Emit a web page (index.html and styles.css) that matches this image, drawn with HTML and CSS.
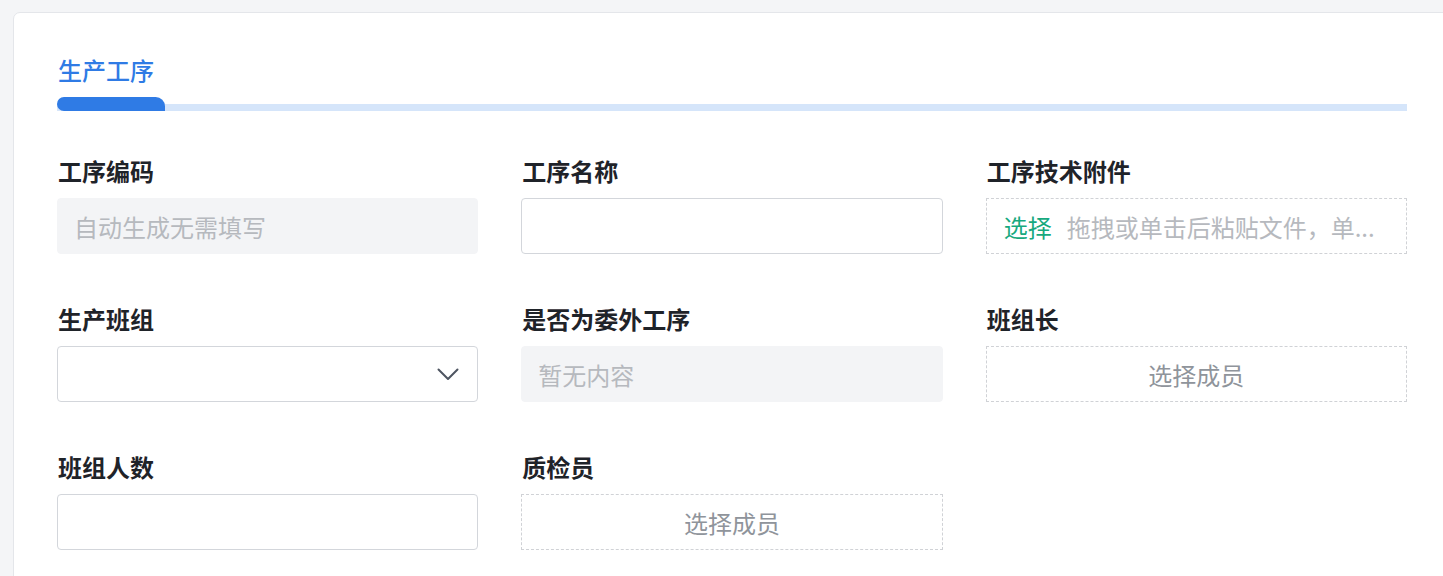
FILE: index.html
```html
<!DOCTYPE html>
<html lang="zh-CN">
<head>
<meta charset="utf-8">
<title>生产工序</title>
<link rel="stylesheet" href="styles.css">
</head>
<body>
<div class="page">
  <div class="card">
    <div class="tabs">
      <div class="tab-title">生产工序</div>
      <div class="tab-track"><div class="tab-indicator"></div></div>
    </div>
    <div class="form">
      <div class="field">
        <div class="label">工序编码</div>
        <div class="input disabled"><span class="placeholder">自动生成无需填写</span></div>
      </div>
      <div class="field">
        <div class="label">工序名称</div>
        <div class="input"></div>
      </div>
      <div class="field">
        <div class="label">工序技术附件</div>
        <div class="dashed upload"><span class="upload-btn">选择</span><span class="upload-tip">拖拽或单击后粘贴文件，单...</span></div>
      </div>
      <div class="field">
        <div class="label">生产班组</div>
        <div class="input select">
          <svg class="chevron" width="22" height="13" viewBox="0 0 22 13"><path d="M1.5 1.5 L11 11 L20.5 1.5" fill="none" stroke="#4e5561" stroke-width="2" stroke-linecap="round" stroke-linejoin="round"/></svg>
        </div>
      </div>
      <div class="field">
        <div class="label">是否为委外工序</div>
        <div class="input disabled"><span class="placeholder">暂无内容</span></div>
      </div>
      <div class="field">
        <div class="label">班组长</div>
        <div class="dashed member">选择成员</div>
      </div>
      <div class="field">
        <div class="label">班组人数</div>
        <div class="input"></div>
      </div>
      <div class="field">
        <div class="label">质检员</div>
        <div class="dashed member">选择成员</div>
      </div>
    </div>
  </div>
</div>
</body>
</html>
```

FILE: styles.css
```css
html, body {
  margin: 0;
  padding: 0;
  background: #f4f5f7;
  overflow: hidden;
  font-family: "Noto Sans CJK SC", "Noto Sans", sans-serif;
}
.page {
  width: 1443px;
  height: 576px;
  padding: 12px 0 0 13px;
  box-sizing: border-box;
  overflow: hidden;
}
.card {
  width: 1437px;
  height: 620px;
  background: #ffffff;
  border: 1px solid #e4e6ea;
  border-radius: 7px;
  box-sizing: border-box;
  padding: 40px 43px 0 43px;
}
.tabs {
  width: 1350px;
}
.tab-title {
  font-size: 24px;
  line-height: 34px;
  color: #2f7be5;
  font-weight: 500;
  padding-left: 1px;
}
.tab-track {
  margin-top: 10px;
  height: 14px;
  display: flex;
  align-items: flex-end;
  background: linear-gradient(to bottom, transparent 7px, #d5e5fa 7px);
}
.tab-indicator {
  width: 108px;
  height: 14px;
  background: #2f7be5;
  border-radius: 9px 12px 0 9px;
}
.form {
  margin-top: 43px;
  width: 1350px;
  display: grid;
  grid-template-columns: repeat(3, minmax(0, 1fr));
  column-gap: 43px;
  row-gap: 48px;
}
.field {
  display: flex;
  flex-direction: column;
  gap: 10px;
  min-width: 0;
}
.label {
  font-size: 24px;
  line-height: 34px;
  font-weight: 700;
  color: #1f2329;
  padding-left: 1px;
}
.input {
  height: 56px;
  box-sizing: border-box;
  border: 1px solid #d3d6db;
  border-radius: 4px;
  display: flex;
  align-items: center;
  padding: 0 16px;
  background: #fff;
}
.input.disabled {
  background: #f3f4f6;
  border-color: #f3f4f6;
}
.placeholder {
  font-size: 24px;
  color: #b6b9be;
}
.select {
  justify-content: flex-end;
  padding-right: 18px;
}
.chevron {
  display: block;
}
.dashed {
  height: 56px;
  box-sizing: border-box;
  border: 1px dashed #d0d2d6;
  display: flex;
  align-items: center;
  font-size: 24px;
  min-width: 0;
}
.upload {
  padding: 0 17px;
  white-space: nowrap;
}
.upload-btn {
  color: #17a97e;
  margin-right: 15px;
  flex: none;
}
.upload-tip {
  color: #b6b9be;
  white-space: nowrap;
}
.member {
  justify-content: center;
  color: #8f949b;
}
```
